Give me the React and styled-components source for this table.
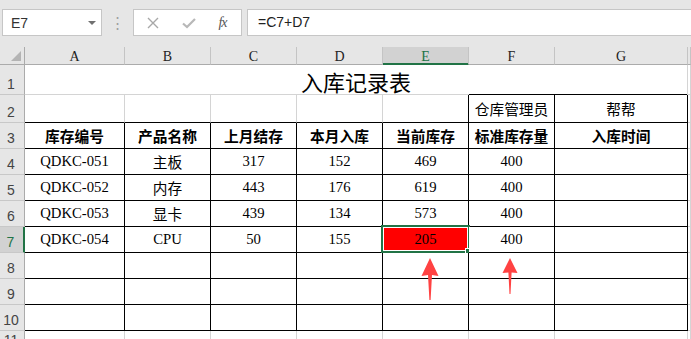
import { Fragment } from 'react';
import styled, { createGlobalStyle } from 'styled-components';

const GlobalStyle = createGlobalStyle`
  html, body {
    margin: 0;
    padding: 0;
    background: #e6e6e6;
  }
`;

const LINE = '#d4d4d4';
const INK = '#000';
const GREEN = '#217346';

const StyledWindow = styled.div`
  position: relative;
  width: 691px;
  height: 339px;
  overflow: hidden;
  background: #e6e6e6;
  font-family: 'Liberation Sans', Arial, sans-serif;
`;

const StyledFormulaBar = styled.div`
  display: flex;
  align-items: flex-start;
  height: 47px;
  padding: 9px 0 0 2px;
  box-sizing: border-box;
  .name-box {
    display: flex;
    align-items: center;
    justify-content: space-between;
    width: 100px;
    height: 27px;
    box-sizing: border-box;
    padding: 0 5px 0 8px;
    background: #fff;
    border: 1px solid #c6c6c6;
    font-size: 14px;
    color: #333;
  }
  .caret {
    width: 0;
    height: 0;
    border-left: 4px solid transparent;
    border-right: 4px solid transparent;
    border-top: 4px solid #707070;
  }
  .dots {
    width: 31px;
    text-align: center;
    line-height: 27px;
    font-size: 15px;
    color: #a0a0a0;
  }
  .buttons {
    display: flex;
    align-items: center;
    justify-content: space-around;
    width: 109px;
    height: 27px;
    box-sizing: border-box;
    padding: 0 4px 0 2px;
    background: #fff;
    border: 1px solid #c6c6c6;
  }
  .fx {
    font-family: 'Liberation Serif', serif;
    font-style: italic;
    font-size: 14px;
    color: #555;
    letter-spacing: -1px;
  }
  .formula {
    flex: 1;
    height: 27px;
    margin-left: 5px;
    box-sizing: border-box;
    padding-left: 10px;
    line-height: 25px;
    background: #fff;
    border: 1px solid #c6c6c6;
    border-right: none;
    font-size: 14px;
    color: #222;
  }
`;

const StyledSheet = styled.div`
  display: grid;
  grid-template-columns: 25px 100px repeat(5, 86px) 133px 1fr;
  grid-template-rows: 18px 30px 28px repeat(8, 26px) 20px;
  background: #fff;
`;

const ColHead = styled.div`
  display: flex;
  align-items: center;
  justify-content: center;
  box-sizing: border-box;
  padding-top: 2px;
  background: ${(p) => (p.$active ? '#d2d2d2' : '#e6e6e6')};
  border-right: 1px solid #c4c4c4;
  border-bottom: 1px solid ${(p) => (p.$active ? GREEN : '#ababab')};
  box-shadow: ${(p) => (p.$active ? `inset 0 -1px 0 ${GREEN}` : 'none')};
  color: ${(p) => (p.$active ? GREEN : '#222')};
  font-family: 'Liberation Serif', serif;
  font-size: 14px;
`;

const Corner = styled.div`
  display: flex;
  align-items: flex-end;
  justify-content: flex-end;
  box-sizing: border-box;
  padding: 0 3px 3px 0;
  background: #e6e6e6;
  border-right: 1px solid #ababab;
  border-bottom: 1px solid #ababab;
  .tri {
    width: 0;
    height: 0;
    border-left: 10px solid transparent;
    border-bottom: 10px solid #b4b4b4;
  }
`;

const RowHead = styled.div`
  display: flex;
  align-items: flex-end;
  justify-content: center;
  box-sizing: border-box;
  padding: 0 2px 1px 0;
  background: ${(p) => (p.$active ? '#d2d2d2' : '#e6e6e6')};
  border-right: ${(p) => (p.$active ? `2px solid ${GREEN}` : '1px solid #ababab')};
  border-bottom: 1px solid #c8c8c8;
  color: ${(p) => (p.$active ? GREEN : '#444')};
  font-size: 14px;
  line-height: 18px;
`;

const Cell = styled.div`
  position: relative;
  display: flex;
  align-items: center;
  justify-content: center;
  box-sizing: border-box;
  background: ${(p) => p.$fill || '#fff'};
  border-right: 1px solid ${(p) => p.$r || LINE};
  border-bottom: ${(p) => (p.$noBottom ? 'none' : `1px solid ${p.$b || LINE}`)};
  font-family: 'Liberation Serif', 'Noto Sans CJK SC', serif;
  font-size: 14.7px;
  font-weight: ${(p) => (p.$bold ? 700 : 400)};
  color: #000;
  white-space: nowrap;
`;

const TitleCell = styled(Cell)`
  grid-column: span 7;
  border-bottom: none;
  background: linear-gradient(to right, ${LINE} 0 444px, ${INK} 444px) bottom / 100% 1px no-repeat, #fff;
  padding-top: 2px;
  font-family: 'Noto Sans CJK SC', sans-serif;
  font-size: 22px;
`;

const Selection = styled.div`
  position: absolute;
  top: -2px;
  left: -2px;
  right: -2px;
  bottom: -1px;
  border: 2px solid ${GREEN};
  box-shadow: inset 0 0 0 1px #fff;
  pointer-events: none;
  .handle {
    position: absolute;
    right: -4px;
    bottom: -4px;
    width: 5px;
    height: 5px;
    background: ${GREEN};
    border: 1px solid #fff;
  }
`;

const Overlay = styled.svg`
  position: absolute;
  top: 0;
  left: 0;
  pointer-events: none;
`;

const columns = ['A', 'B', 'C', 'D', 'E', 'F', 'G'];
const headers = ['库存编号', '产品名称', '上月结存', '本月入库', '当前库存', '标准库存量', '入库时间'];
const rows = [
  ['QDKC-051', '主板', '317', '152', '469', '400', ''],
  ['QDKC-052', '内存', '443', '176', '619', '400', ''],
  ['QDKC-053', '显卡', '439', '134', '573', '400', ''],
  ['QDKC-054', 'CPU', '50', '155', '205', '400', ''],
  ['', '', '', '', '', '', ''],
  ['', '', '', '', '', '', ''],
  ['', '', '', '', '', '', ''],
];

const FormulaBar = () => (
  <StyledFormulaBar>
    <div className="name-box">
      E7
      <span className="caret" />
    </div>
    <div className="dots">⋮</div>
    <div className="buttons">
      <svg width="14" height="14" viewBox="0 0 14 14">
        <path d="M2 2 L12 12 M12 2 L2 12" stroke="#a8a8a8" strokeWidth="1.4" fill="none" />
      </svg>
      <svg width="16" height="14" viewBox="0 0 16 14">
        <path d="M2 7.5 L6 11 L14 3" stroke="#b8b8b8" strokeWidth="2.2" fill="none" />
      </svg>
      <span className="fx">fx</span>
    </div>
    <div className="formula">=C7+D7</div>
  </StyledFormulaBar>
);

const App = () => {
  return (
    <StyledWindow>
      <GlobalStyle />
      <FormulaBar />
      <StyledSheet>
        <Corner>
          <span className="tri" />
        </Corner>
        {columns.map((c) => (
          <ColHead key={c} $active={c === 'E'}>
            {c}
          </ColHead>
        ))}
        <ColHead />

        <RowHead>1</RowHead>
        <TitleCell>入库记录表</TitleCell>
        <Cell />

        <RowHead>2</RowHead>
        {columns.map((c, i) => (
          <Cell key={c} $r={i >= 4 && i < 7 ? INK : LINE} $b={INK}>
            {c === 'F' ? '仓库管理员' : c === 'G' ? '帮帮' : ''}
          </Cell>
        ))}
        <Cell />

        <RowHead>3</RowHead>
        {headers.map((h) => (
          <Cell key={h} $r={INK} $b={INK} $bold>
            {h}
          </Cell>
        ))}
        <Cell />

        {rows.map((row, r) => (
          <Fragment key={r}>
            <RowHead $active={r === 3}>{r + 4}</RowHead>
            {row.map((v, i) => {
              const selected = r === 3 && i === 4;
              return (
                <Cell key={i} $r={INK} $b={INK} $fill={selected ? '#ff0000' : null}>
                  {v}
                  {selected && (
                    <Selection>
                      <span className="handle" />
                    </Selection>
                  )}
                </Cell>
              );
            })}
            <Cell />
          </Fragment>
        ))}

        <RowHead>11</RowHead>
        {columns.map((c) => (
          <Cell key={`e${c}`} $noBottom />
        ))}
        <Cell $noBottom />
      </StyledSheet>

      <Overlay width="691" height="339">
        <polygon
          points="430,258 438.5,276 432,275 430.6,300 429.4,300 428,275 421.5,276"
          fill="#ff4242"
        />
        <polygon
          points="510,258 517.5,273 511.6,272.5 510.5,294 509.5,294 508.4,272.5 502.5,273"
          fill="#ff4242"
        />
      </Overlay>
    </StyledWindow>
  );
};

export default App;
